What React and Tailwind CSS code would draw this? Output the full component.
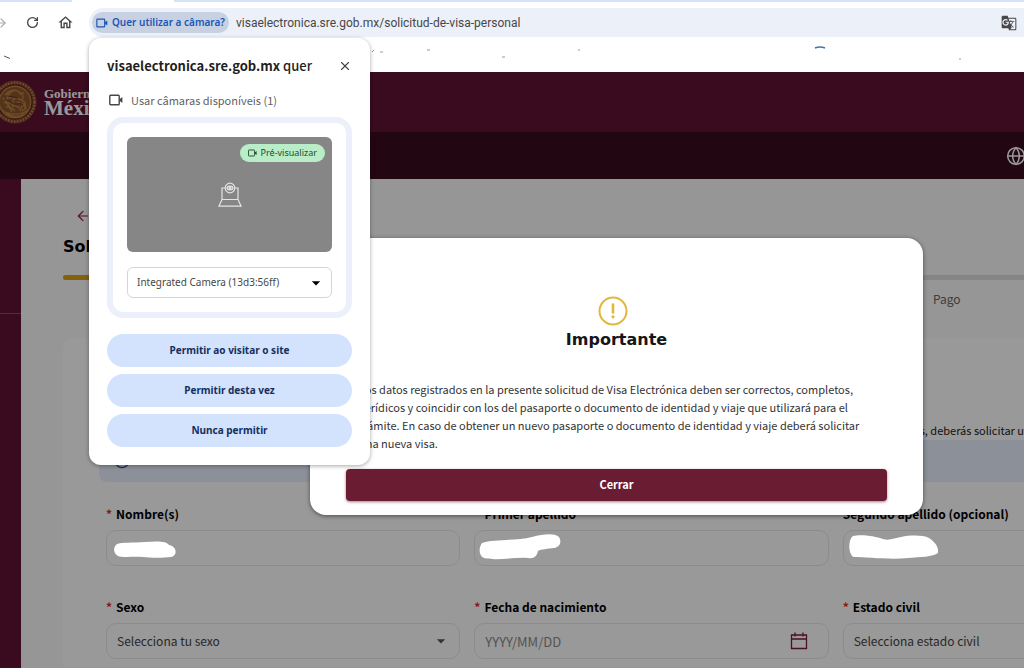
import React, { useState } from 'react';
import { RotateCw, ArrowLeft, ArrowRight, Globe, Info, X } from 'lucide-react';
import { MdArrowDropDown, MdGTranslate, MdOutlineHome } from 'react-icons/md';

const VideoIcon = ({ className }) => (
    <svg viewBox="0 0 14 12" className={className} fill="none" aria-hidden="true">
        <rect x="0.8" y="1.3" width="9.4" height="9.4" rx="0.8" stroke="currentColor" strokeWidth="1.4" />
        <path d="M10.4 5.2 13.4 3v6l-3-2.2z" fill="currentColor" />
    </svg>
);

const LaptopCameraIcon = () => (
    <svg viewBox="0 0 24 26" className="w-6 h-[26px]" fill="none" stroke="#e4e4e4" strokeWidth="1.2" aria-hidden="true">
        <path d="M7.5 6H4v11.5h16V6h-3.5M4 17.5.9 24.2h22.2L20 17.5" />
        <circle cx="12" cy="6" r="4.8" />
        <ellipse cx="12" cy="6" rx="2.9" ry="1.8" />
        <circle cx="12" cy="6" r="1" fill="#e4e4e4" />
    </svg>
);

const CalendarIcon = () => (
    <svg viewBox="0 0 18 18" className="w-[18px] h-[18px]" fill="none" stroke="#7a1c40" strokeWidth="1.3" aria-hidden="true">
        <path d="M1.5 3h15v13.5h-15zM1.5 7h15M5 .5v4M13 .5v4" />
    </svg>
);

const Seal = () => (
    <svg viewBox="0 0 44 44" className="w-11 h-11 shrink-0" fill="none" stroke="#b98040" aria-hidden="true">
        <circle cx="22" cy="22" r="19.5" stroke="#7d4630" strokeWidth="4" />
        <circle cx="22" cy="22" r="19.5" strokeWidth="2.4" strokeDasharray="1.6 1.4" />
        <circle cx="22" cy="22" r="15.8" fill="#8c5630" strokeWidth="1.4" />
        <path d="M12 15c4-5 10-6 14-3 4 2 5 5 3 8l-6-2c-3 1-4 4-2 7l6 3M13 19c3-2 7-2 9 0M11 23c4-2 7 0 10 4M13 27c3-1 6 1 9 4M26 14l5-1M28 20c4 1 5 4 4 8M9 30c5 5 19 6 26 0M13 34c6 3 13 3 18 0M30 24l3 4-4 3M17 13l-4 8 5 8M10 18l5 7 4 7M20 11l-6 4M24 22l6 2-3 7" strokeWidth="1.4" />
        <path d="M11 20c4-1 6 3 10 4s6-2 9 1M15 16l10 2" stroke="#5f2c26" strokeWidth="1" />
    </svg>
);

// White strokes painted over the personal data
const scribbles = {
    nombre: 'M9 13c4-2 16-1 28-2 12-1 22-1 24 3 8 1 9 11 2 12-8 1-20 1-28 0-10-1-20 1-25-1-5-3-5-9-1-12z',
    primer: 'M6 12c12-4 34-2 50-6 12-3 22-4 27 0 3 5 1 10-5 11-6 1-13 1-16 3-1 5-4 8-10 7-14-1-32 3-44 0-6-3-5-11-2-15z',
    segundo: 'M8 5c8-2 22 0 30 3 6 2 12-1 18-2 10-2 22-2 28 1 6 4 10 9 9 15-5 4-18 4-30 5-18 2-42-1-54-1-6-2-6-18-1-21z',
};

const Scribble = ({ d }) => (
    <svg viewBox="0 0 100 36" className="absolute left-[2px] top-px z-20 w-[100px] h-[36px]" aria-hidden="true">
        <path d={d} fill="#fff" />
    </svg>
);

const Field = ({ id, label, required, scribble, icon, children }) => (
    <div className="space-y-[6px] min-w-0">
        <label htmlFor={id} className="flex gap-1 h-5 items-center text-[12px] font-semibold text-black whitespace-nowrap">
            {required && <span className="text-[#e02b20]">*</span>}
            {label}
        </label>
        <div className="relative h-9">
            {children}
            {scribble && <Scribble d={scribble} />}
            {icon && <span className="absolute right-0 top-0 h-full flex items-center pointer-events-none">{icon}</span>}
        </div>
    </div>
);

const control = 'block w-full h-full appearance-none rounded-[10px] border border-[#e8e8e8] bg-transparent px-[10px] text-[12px] text-[#444] placeholder:text-[13px] placeholder:text-[#8c8c8c]';

const PermissionPopup = ({ onClose }) => (
    <section className="absolute left-0 top-full mt-px w-[281px] rounded-xl bg-white p-[18px] shadow-[0_1px_4px_rgba(0,0,0,0.35)] text-[#474747]">
        <div className="flex items-center justify-between h-5">
            <h2 className="text-[13px] font-medium text-[#1f1f1f] whitespace-nowrap">
                <b>visaelectronica.sre.gob.mx</b> quer
            </h2>
            <button aria-label="Fechar" onClick={onClose}><X className="w-[14px] h-[14px]" strokeWidth={2} /></button>
        </div>
        <div className="mt-[14px] flex items-center h-5 gap-2 pl-[2px] text-[11px] text-[#5f6063]">
            <VideoIcon className="w-[14px] h-3 text-[#474747]" />
            <span>Usar câmaras disponíveis (1)</span>
        </div>
        <div className="mt-[7px] rounded-2xl border-6 border-[#ecf0fa] p-[14px] font-['Noto_Sans',sans-serif]">
            <div className="relative h-[115px] rounded-md bg-[#868687] flex items-center justify-center">
                <LaptopCameraIcon />
                <span className="absolute right-[7px] top-[7px] flex items-center gap-1 h-[18px] rounded-full bg-[#b9edc8] px-2 text-[9px] text-[#234a30]">
                    <VideoIcon className="w-[9px] h-2" />
                    Pré-visualizar
                </span>
            </div>
            <div className="relative mt-[15px] h-[31px]">
                <select aria-label="Câmara" className="block w-full h-full appearance-none rounded-md border border-[#d5d5d8] bg-white px-[9px] text-[10px] text-[#474747]">
                    <option>Integrated Camera (13d3:56ff)</option>
                </select>
                <MdArrowDropDown className="absolute right-[6px] top-[6px] w-5 h-5 text-black pointer-events-none" />
            </div>
        </div>
        <div className="mt-4 flex flex-col gap-[7px] font-['Noto_Sans',sans-serif]">
            {['Permitir ao visitar o site', 'Permitir desta vez', 'Nunca permitir'].map(text => (
                <button key={text} onClick={onClose} className="h-[33px] rounded-full bg-[#d3e2fd] text-[10px] font-bold text-[#14305e]">
                    {text}
                </button>
            ))}
        </div>
    </section>
);

const BrowserBar = () => {
    const [asking, setAsking] = useState(true);

    return (
        <div className="relative z-40 bg-white font-['Noto_Sans_CJK_SC',sans-serif]">
            <div className="flex h-[2px]">
                <div className="w-[72px] bg-[#d6e2f5]"></div>
                <div className="w-[102px]"></div>
                <div className="flex-1 bg-[#d6e2f5]"></div>
            </div>
            <div className="flex items-center pt-[6px] text-[#474747]">
                <div className="w-[89px] flex items-center gap-[18px] shrink-0">
                    <button aria-label="Avançar" className="w-2 overflow-hidden flex justify-end text-[#aaa]"><ArrowRight className="w-[14px] h-[14px] shrink-0" /></button>
                    <button aria-label="Recarregar"><RotateCw className="w-[13px] h-[13px]" strokeWidth={2.4} /></button>
                    <button aria-label="Página inicial"><MdOutlineHome className="w-[17px] h-[17px]" /></button>
                </div>
                <div className="relative flex-1 flex items-center h-[29px] rounded-l-full bg-[#ecf0f9] pl-[3px] pr-[7px]">
                    <button onClick={() => setAsking(true)} className="flex items-center gap-1 h-[21px] rounded-full bg-[#c8d1e1] px-1 text-[10px] font-['Noto_Sans',sans-serif] font-semibold text-[#1a56b8] whitespace-nowrap">
                        <VideoIcon className="w-3 h-[10px]" />
                        Quer utilizar a câmara?
                    </button>
                    <input aria-label="Endereço" readOnly value="visaelectronica.sre.gob.mx/solicitud-de-visa-personal" className="flex-1 min-w-0 pl-[7px] text-[12px] font-['Roboto',sans-serif] bg-transparent" />
                    <MdGTranslate className="w-4 h-4" />
                    {asking && <PermissionPopup onClose={() => setAsking(false)} />}
                </div>
            </div>
            <div className="h-[35px] overflow-hidden">
                <svg viewBox="0 0 1024 36" className="w-[1024px] h-9" fill="none" aria-hidden="true">
                    <path d="M4 19l6 2.5" stroke="#555" />
                    <path d="M372 15l2-2M380 15h3M427 13h3M502 20h3M578 13h2M959 22h2" stroke="#999" />
                    <path d="M815 11q5-2 10 0" stroke="#3f76a8" strokeWidth="1.5" />
                </svg>
            </div>
        </div>
    );
};

const ImportantDialog = ({ onClose }) => (
    <div role="dialog" aria-labelledby="importante" className="w-full max-w-[613px] rounded-2xl bg-white px-9 pt-[58px] pb-[14px] flex flex-col items-center shadow-[0_1px_4px_rgba(0,0,0,0.5)]">
        <svg viewBox="0 0 30 30" className="w-[30px] h-[30px] mr-2" fill="none" stroke="#e0b93c" aria-hidden="true">
            <circle cx="15" cy="15" r="13.5" strokeWidth="2" />
            <path d="M15 8.5v8" strokeWidth="2.6" strokeLinecap="round" />
            <circle cx="15" cy="20.8" r="1.6" fill="#e0b93c" stroke="none" />
        </svg>
        <h2 id="importante" className="mt-[2px] text-[16px] leading-6 font-bold text-[#161616] font-['DejaVu_Sans',sans-serif]">Importante</h2>
        <p className="mt-7 self-start pl-[13px] text-[11px] leading-[18px] text-[#333] whitespace-nowrap">
            Los datos registrados en la presente solicitud de Visa Electrónica deben ser correctos, completos,<br />
            verídicos y coincidir con los del pasaporte o documento de identidad y viaje que utilizará para el<br />
            trámite. En caso de obtener un nuevo pasaporte o documento de identidad y viaje deberá solicitar<br />
            una nueva visa.
        </p>
        <button onClick={onClose} className="mt-[17px] h-8 w-full rounded-sm bg-[#691c32] pb-[2px] text-[11px] font-semibold text-white shadow-[0_1px_3px_rgba(105,28,50,0.6)]">
            Cerrar
        </button>
    </div>
);

const VisaForm = () => (
    <main className="flex-1 min-w-0 bg-[#fafafa] pl-[42px] pr-[10px] pt-[29px]">
        <a href="#" aria-label="Regresar" className="block w-fit pl-3 text-[#8a1f47]"><ArrowLeft className="w-4 h-4" strokeWidth={1.8} /></a>
        <h1 className="mt-[13px] text-[16px] leading-5 font-bold text-black font-['DejaVu_Sans',sans-serif]">Solicitud</h1>
        <div className="mt-[18px] grid grid-cols-4 h-[5px] rounded-full bg-[#dedede]">
            <div className="rounded-full bg-[#d9a514]"></div>
        </div>
        <div className="mt-[9px] grid grid-cols-4 text-[12px] leading-5 text-[#666]">
            <span className="col-start-4">Pago</span>
        </div>
        <div className="mt-[29px] rounded-tl-xl bg-white pl-9 pr-[26px] pt-[82px] pb-2 -mr-[10px]">
            <p className="pr-[183px] text-right text-[11px] leading-5 text-[#222] whitespace-nowrap">s, deberás solicitar u</p>
            <div className="h-[42px] rounded-lg bg-[#e8f1ff] flex items-center pl-[15px]">
                <Info className="w-4 h-4 text-[#1f4fa8]" />
            </div>
            <form className="mt-[22px] pl-[7px] pr-[10px] grid grid-cols-3 gap-x-[14px] gap-y-[31px]">
                <Field id="nombre" label="Nombre(s)" required scribble={scribbles.nombre}>
                    <input id="nombre" className={control} />
                </Field>
                <Field id="primer" label="Primer apellido" required scribble={scribbles.primer}>
                    <input id="primer" className={control} />
                </Field>
                <Field id="segundo" label="Segundo apellido (opcional)" scribble={scribbles.segundo}>
                    <input id="segundo" className={control} />
                </Field>
                <Field id="sexo" label="Sexo" required icon={<MdArrowDropDown className="w-5 h-5 mr-[9px] text-[#555]" />}>
                    <select id="sexo" className={control}><option>Selecciona tu sexo</option></select>
                </Field>
                <Field id="nacimiento" label="Fecha de nacimiento" required icon={<span className="mr-[21px]"><CalendarIcon /></span>}>
                    <input id="nacimiento" placeholder="YYYY/MM/DD" className={control} />
                </Field>
                <Field id="civil" label="Estado civil" required icon={<MdArrowDropDown className="w-5 h-5 mr-[9px] text-[#555]" />}>
                    <select id="civil" className={control}><option>Selecciona estado civil</option></select>
                </Field>
            </form>
        </div>
    </main>
);

const App = () => {
    const [dialog, setDialog] = useState(true);

    return (
        <div className="min-h-screen flex flex-col overflow-hidden bg-white">
            <BrowserBar />
            <div className="relative flex-1 flex flex-col w-[calc(100%+209px)] font-['Noto_Sans_CJK_SC',sans-serif]">
                <header className="h-[60px] bg-[#611232] flex items-center overflow-hidden">
                    <div className="flex items-center gap-[7px] -ml-[7px] text-white font-['Liberation_Serif',serif]">
                        <Seal />
                        <div>
                            <div className="text-[13px] leading-3 font-bold">Gobierno de</div>
                            <div className="text-[21px] leading-4 font-bold">México</div>
                        </div>
                    </div>
                </header>
                <nav className="h-[47px] bg-[#3a0c21] flex items-center justify-end pr-[207px]">
                    <button aria-label="Idioma"><Globe className="w-5 h-5 text-white" strokeWidth={1.8} /></button>
                </nav>
                <div className="flex-1 flex">
                    <aside className="w-[21px] shrink-0 bg-[#611232] pt-[134px]">
                        <hr className="border-[#8c4a64]" />
                    </aside>
                    <VisaForm />
                </div>
                {dialog && (
                    <div className="absolute inset-0 z-10 bg-black/40"></div>
                )}
                {dialog && (
                    <div className="absolute inset-0 z-30 flex items-start justify-center pt-[166px]">
                        <ImportantDialog onClose={() => setDialog(false)} />
                    </div>
                )}
            </div>
        </div>
    );
};

export default App;
